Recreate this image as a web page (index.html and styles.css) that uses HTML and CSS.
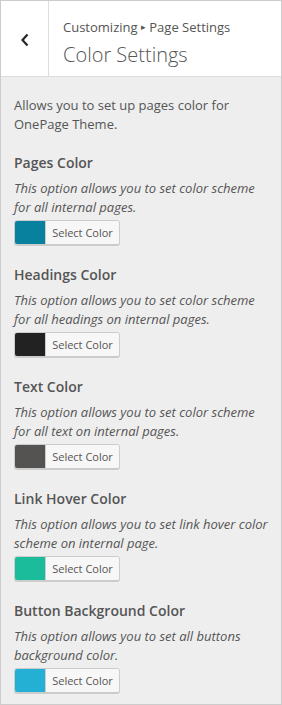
FILE: index.html
```html
<!DOCTYPE html>
<html lang="en">

<head>
    <meta charset="UTF-8">
    <title>Color Settings</title>
    <link rel="stylesheet" href="styles.css">
</head>

<body>
    <div class="panel">
        <div class="panel-header">
            <button class="back-btn" type="button">
                <svg width="10" height="14" viewBox="0 0 10 14">
                    <path d="M7.5 1.5 L2.5 7 L7.5 12.5" fill="none" stroke="#23282d" stroke-width="2.2" />
                </svg>
            </button>
            <div class="header-title">
                <span class="crumbs">Customizing <span class="sep">&#9656;</span> Page Settings</span>
                <h1>Color Settings</h1>
            </div>
        </div>

        <div class="panel-body">
            <p class="intro">Allows you to set up pages color for OnePage Theme.</p>

            <div class="control">
                <h3>Pages Color</h3>
                <p class="desc">This option allows you to set color scheme for all internal pages.</p>
                <button class="color-btn" type="button"><span class="swatch" style="background:#07819d"></span><span class="label">Select Color</span></button>
            </div>

            <div class="control">
                <h3>Headings Color</h3>
                <p class="desc">This option allows you to set color scheme for all headings on internal pages.</p>
                <button class="color-btn" type="button"><span class="swatch" style="background:#222222"></span><span class="label">Select Color</span></button>
            </div>

            <div class="control">
                <h3>Text Color</h3>
                <p class="desc">This option allows you to set color scheme for all text on internal pages.</p>
                <button class="color-btn" type="button"><span class="swatch" style="background:#555252"></span><span class="label">Select Color</span></button>
            </div>

            <div class="control">
                <h3>Link Hover Color</h3>
                <p class="desc">This option allows you to set link hover color scheme on internal page.</p>
                <button class="color-btn" type="button"><span class="swatch" style="background:#1abc9c"></span><span class="label">Select Color</span></button>
            </div>

            <div class="control">
                <h3>Button Background Color</h3>
                <p class="desc">This option allows you to set all buttons background color.</p>
                <button class="color-btn" type="button"><span class="swatch" style="background:#24b0d5"></span><span class="label">Select Color</span></button>
            </div>
        </div>
    </div>
</body>

</html>
```

FILE: styles.css
```css
body {
    margin: 0;
    font-family: 'Open Sans', sans-serif;
    color: rgb(85, 85, 85);
    background: rgb(238, 238, 238);
}

.panel {
    height: 705px;
    box-sizing: border-box;
    border: 1px solid rgb(204, 204, 204);
    background: rgb(238, 238, 238);
}

.panel-header {
    display: flex;
    height: 75px;
    background: rgb(255, 255, 255);
    border-bottom: 1px solid rgb(221, 221, 221);
}

.back-btn {
    width: 48px;
    padding: 0;
    margin: 0;
    border: none;
    border-right: 1px solid rgb(221, 221, 221);
    background: rgb(255, 255, 255);
    display: flex;
    align-items: center;
    justify-content: center;
}

.back-btn svg {
    margin-top: 3px;
}

.header-title {
    padding: 16px 0 0 14px;
}

.crumbs {
    display: block;
    font-size: 13px;
    line-height: 20px;
    margin-bottom: 3px;
}

.crumbs .sep {
    font-size: 9px;
    vertical-align: 2px;
}

.header-title h1 {
    margin: 0;
    font-size: 20px;
    font-weight: 300;
    line-height: 30px;
}

.panel-body {
    padding: 19px 13px 0;
}

.intro {
    margin: 0 0 17px;
    font-size: 13px;
    line-height: 19px;
}

.control {
    height: 112px;
}

.control h3 {
    margin: 0;
    font-size: 14px;
    font-weight: 600;
    line-height: 24px;
}

.desc {
    margin: 4px 0 3px;
    font-size: 13px;
    font-style: italic;
    line-height: 19px;
}

.color-btn {
    display: flex;
    height: 25px;
    width: 106px;
    padding: 0;
    border: 1px solid rgb(204, 204, 204);
    border-radius: 3px;
    background: rgb(247, 247, 247);
    box-shadow: 0 1px 0 rgb(204, 204, 204);
    overflow: hidden;
    font-family: 'Open Sans', sans-serif;
}

.swatch {
    width: 30px;
    height: 100%;
}

.label {
    flex: 1;
    font-size: 11px;
    line-height: 23px;
    color: rgb(85, 85, 85);
    border-left: 1px solid rgb(204, 204, 204);
    background: rgb(247, 247, 247);
}
```
